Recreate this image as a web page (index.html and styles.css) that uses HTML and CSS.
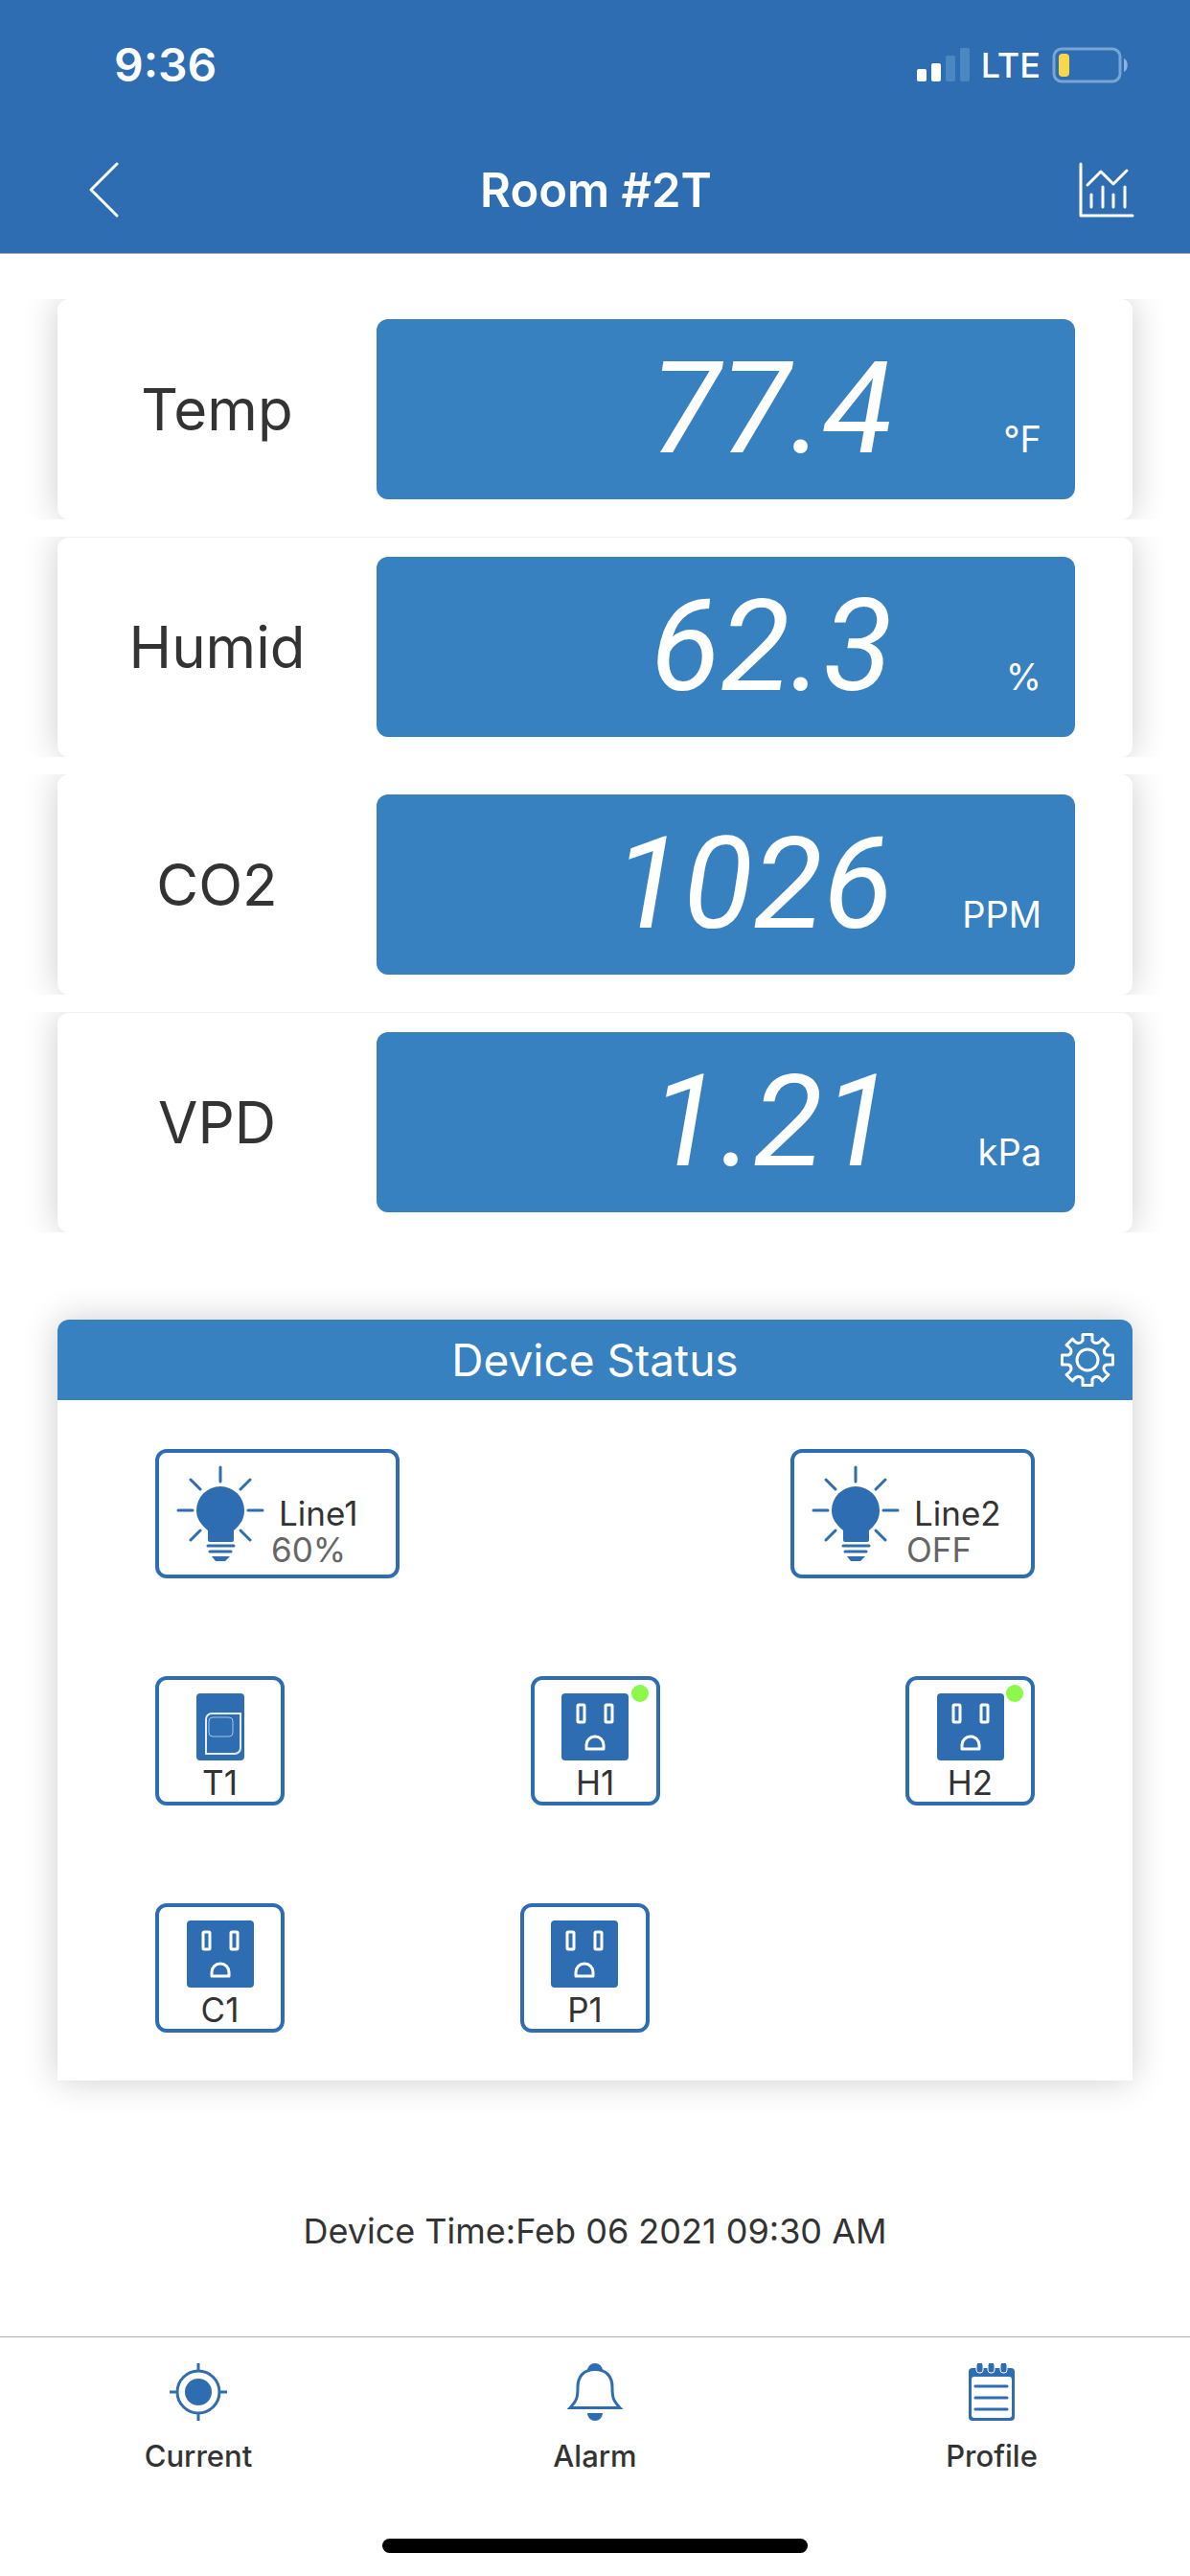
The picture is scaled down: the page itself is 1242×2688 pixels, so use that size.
FILE: index.html
```html
<!DOCTYPE html>
<html lang="en">
<head>
<meta charset="utf-8">
<meta name="viewport" content="width=device-width, initial-scale=1">
<title>Room #2T</title>
<link rel="stylesheet" href="styles.css">
</head>
<body>
<svg class="sprite" aria-hidden="true">
  <symbol id="bulb" viewBox="0 0 92 100">
    <g fill="none" stroke="currentColor" stroke-width="3" stroke-linecap="round">
      <path d="M46 2V17M2 47H17M75 47H90M15 15L25 25M77 15L67 25M15 78L25 68M77 78L67 68"/>
      <path d="M33 84H60M35 90H57"/>
    </g>
    <path fill="currentColor" d="M46 22a25 25 0 0 1 25 25c0 9-4 15-11 21v10a2 2 0 0 1-2 2H35a2 2 0 0 1-2-2V68c-7-6-12-12-12-21a25 25 0 0 1 25-25zM37 95H56L51 100H41z"/>
  </symbol>
  <symbol id="outlet" viewBox="0 0 70 70">
    <rect width="70" height="70" rx="4" fill="currentColor"/>
    <g fill="none" stroke="#fff" stroke-width="3" stroke-linejoin="round">
      <rect x="17" y="12" width="7" height="18" rx="1"/>
      <rect x="46" y="12" width="7" height="18" rx="1"/>
      <path d="M26 58V54a9 9 0 0 1 18 0V58z"/>
    </g>
  </symbol>
</svg>

<header class="top">
  <div class="status">
    <span class="clock">9:36</span>
    <span class="indicators">
      <svg width="55" height="36" viewBox="0 0 55 36" aria-label="Signal">
        <g fill="#fff"><rect y="22" width="10" height="13" rx="2"/><rect x="15" y="16" width="10" height="19" rx="2"/></g>
        <g fill="#4b87c1"><rect x="30" y="8" width="10" height="27" rx="2"/><rect x="45" width="10" height="35" rx="2"/></g>
      </svg>
      <span class="network">LTE</span>
      <svg width="80" height="38" viewBox="0 0 80 38" aria-label="Battery">
        <rect x="2" y="2" width="69" height="34" rx="8" fill="none" stroke="#78a6d4" stroke-width="3"/>
        <path d="M75 12c5 2 5 12 0 14z" fill="#8fb3da"/>
        <rect x="7" y="7" width="11" height="24" rx="4" fill="#fad749"/>
      </svg>
    </span>
  </div>
  <nav class="titlebar">
    <button class="icon-btn" type="button" aria-label="Back">
      <svg width="32" height="58" viewBox="0 0 32 58"><path d="M30 2L3 29L30 56" fill="none" stroke="#fff" stroke-width="3" stroke-linecap="round" stroke-linejoin="round"/></svg>
    </button>
    <h1>Room #2T</h1>
    <button class="icon-btn chart" type="button" aria-label="Chart">
      <svg width="58" height="58" viewBox="0 0 58 58"><path d="M2 2V56H56M9 24L23 10L36 23L50 9M13 34V47M25 26V47M36 34V47M48 26V47" fill="none" stroke="#fff" stroke-width="3" stroke-linecap="round" stroke-linejoin="round"/></svg>
    </button>
  </nav>
</header>

<main>
  <section class="readings">
    <div class="row"><div class="card"><h2>Temp</h2><p class="display"><span class="value">77.4</span><span class="unit">°F</span></p></div></div>
    <div class="row"><div class="card"><h2>Humid</h2><p class="display"><span class="value">62.3</span><span class="unit">%</span></p></div></div>
    <div class="row"><div class="card"><h2>CO2</h2><p class="display"><span class="value">1026</span><span class="unit">PPM</span></p></div></div>
    <div class="row"><div class="card"><h2>VPD</h2><p class="display"><span class="value">1.21</span><span class="unit">kPa</span></p></div></div>
  </section>

  <section class="panel">
    <div class="panel-head">
      <h2>Device Status</h2>
      <button class="icon-btn" type="button" aria-label="Device settings">
        <svg width="56" height="56" viewBox="-28 -28 56 56" fill="none" stroke="#fff" stroke-width="3" stroke-linejoin="round">
          <circle r="11"/>
          <path d="M-5 -26.500H5V-20Q7 -17 10 -17.500Q13 -18 15.500 -22L22 -15.500Q17 -12 17.500 -9Q17 -6 20 -5H26.500V5H20Q17 6 17 9Q17 12 22 15.500L15.500 22Q13 18 10 17.500Q7 17 5 20V26.500H-5V20Q-7 17 -10 17.500Q-13 18 -15.500 22L-22 15.500Q-17 12 -17 9Q-17 6 -20 5H-26.500V-5H-20Q-17 -6 -17 -9Q-17 -12 -22 -15.500L-15.500 -22Q-13 -18 -10 -17.500Q-7 -17 -5 -20Z"/>
        </svg>
      </button>
    </div>
    <div class="devices">
      <div class="device-row">
        <button class="tile light" type="button"><svg width="92" height="100"><use href="#bulb"/></svg><span class="light-text"><span class="light-name">Line1</span><span class="level">60%</span></span></button>
        <button class="tile light" type="button"><svg width="92" height="100"><use href="#bulb"/></svg><span class="light-text"><span class="light-name">Line2</span><span class="level">OFF</span></span></button>
      </div>
      <div class="device-row">
        <button class="tile" type="button">
          <svg width="50" height="70" viewBox="0 0 50 70"><rect width="50" height="70" rx="4" fill="currentColor"/><g fill="none" stroke="#e3edf7"><path d="M10 63V27a6 6 0 0 1 6-6H46V57a6 6 0 0 1-6 6z" stroke-width="2"/><rect x="13" y="25" width="25" height="20" rx="4" stroke="#a9c6e3"/></g></svg>
          <span>T1</span>
        </button>
        <button class="tile on" type="button"><svg width="70" height="70"><use href="#outlet"/></svg><span>H1</span></button>
        <button class="tile on" type="button"><svg width="70" height="70"><use href="#outlet"/></svg><span>H2</span></button>
      </div>
      <div class="device-row partial">
        <button class="tile" type="button"><svg width="70" height="70"><use href="#outlet"/></svg><span>C1</span></button>
        <button class="tile" type="button"><svg width="70" height="70"><use href="#outlet"/></svg><span>P1</span></button>
      </div>
    </div>
  </section>

  <p class="device-time">Device Time:Feb 06 2021 09:30 AM</p>
</main>

<footer>
  <nav class="tabs">
    <a href="#current">
      <svg width="60" height="60" viewBox="0 0 60 60"><g fill="none" stroke="currentColor" stroke-width="3"><circle cx="30" cy="30" r="22"/><path d="M30 0V8M30 52V60M0 30H8M52 30H60"/></g><circle cx="30" cy="30" r="14" fill="currentColor"/></svg>
      Current
    </a>
    <a href="#alarm">
      <svg width="60" height="60" viewBox="0 0 60 60"><path d="M30 6.500C18 6.500 12 14 12 25C12 36 11 39 4 46.500H56C49 39 48 36 48 25C48 14 42 6.500 30 6.500Z" fill="none" stroke="currentColor" stroke-width="3"/><path d="M22 8a8 8 0 0 1 16 0zM22 52H38a8 8 0 0 1-16 0z" fill="currentColor"/></svg>
      Alarm
    </a>
    <a href="#profile">
      <svg width="48" height="60" viewBox="0 0 48 60"><rect y="5" width="48" height="55" rx="4" fill="currentColor"/><rect x="3" y="14" width="42" height="43" rx="3" fill="#fff"/><path d="M7 24H40M7 36H40M7 48H40" stroke="currentColor" stroke-width="3" stroke-linecap="round"/><g fill="currentColor" stroke="#fff"><rect x="8" y="-1" width="7" height="11" rx="3"/><rect x="20" y="-1" width="7" height="11" rx="3"/><rect x="33" y="-1" width="7" height="11" rx="3"/></g></svg>
      Profile
    </a>
  </nav>
  <div class="home-bar"></div>
</footer>
</body>
</html>
```
FILE: styles.css
```css
:root {
  --navy: #2e6db2;
  --blue: #3781c0;
  --ink: #333;
  --shadow: 0 0 36px rgba(0, 0, 0, .2);
}

* { box-sizing: border-box; }

body {
  margin: 0;
  min-height: 100vh;
  display: flex;
  flex-direction: column;
  background: #fff;
  color: var(--ink);
  font-family: Inter, "Liberation Sans", sans-serif;
}

h1, h2, p { margin: 0; font-weight: 400; }
svg { display: block; flex: none; }
button { font: inherit; color: inherit; }

.sprite { position: absolute; width: 0; height: 0; }

.icon-btn {
  padding: 0;
  border: 0;
  background: none;
}

/* Header */
.top {
  background: var(--navy);
  border-bottom: 1px solid #a3a9b0;
  color: #fff;
}

.status {
  display: flex;
  justify-content: space-between;
  align-items: center;
  height: 132px;
  padding: 3px 64px 0 119px;
}

.clock { font-size: 48px; font-weight: 600; }

.indicators {
  display: flex;
  align-items: center;
  gap: 12px;
}

.network { font-size: 36px; font-weight: 500; }

.titlebar {
  display: grid;
  grid-template-columns: 1fr auto 1fr;
  align-items: center;
  height: 132px;
  padding: 0 58px 0 92px;
}

.titlebar h1 {
  margin-right: 32px;
  font-size: 49px;
  font-weight: 600;
}

.titlebar .chart { justify-self: end; }

/* Readings */
.readings {
  display: flex;
  flex-direction: column;
  gap: 18px;
  padding-top: 47px;
}

.row {
  overflow: hidden;
  padding: 0 60px;
}

.card {
  display: flex;
  align-items: center;
  padding: 21px 60px 21px 0;
  border-radius: 12px;
  background: #fff;
  box-shadow: var(--shadow);
}

.row:nth-child(even) .card { box-shadow: var(--shadow), inset 0 1px #f0f0f0; }

.card h2 {
  flex: 1;
  text-align: center;
  font-size: 60px;
}

.display {
  display: flex;
  justify-content: flex-end;
  align-items: baseline;
  width: 729px;
  max-width: 70%;
  padding-right: 35px;
  border-radius: 12px;
  background: var(--blue);
  color: #fff;
  line-height: 188px;
}

.value {
  font-family: Roboto, "Liberation Sans", sans-serif;
  font-size: 134px;
  font-weight: 400;
  font-style: italic;
}

.unit {
  width: 155px;
  text-align: right;
  font-size: 38px;
  line-height: 48px;
}

/* Device panel */
.panel {
  margin: 91px 60px 0;
  border-radius: 12px 12px 0 0;
  background: #fff;
  box-shadow: var(--shadow);
}

.panel-head {
  display: grid;
  grid-template-columns: 1fr auto 1fr;
  align-items: center;
  height: 84px;
  padding: 0 19px;
  border-radius: 12px 12px 0 0;
  background: var(--blue);
  color: #fff;
}

.panel-head h2 {
  grid-column: 2;
  font-size: 46px;
}

.panel-head .icon-btn { justify-self: end; }

.devices {
  display: flex;
  flex-direction: column;
  gap: 102px;
  padding: 51px 102px 50px;
}

.device-row {
  display: flex;
  justify-content: space-between;
}

.partial::after {
  content: "";
  width: 17%;
}

.tile {
  position: relative;
  display: flex;
  flex-direction: column;
  align-items: center;
  gap: 4px;
  width: 135px;
  height: 135px;
  padding: 14px 0 0;
  border: 4px solid var(--navy);
  border-radius: 12px;
  background: #fff;
  color: var(--ink);
  font-size: 35px;
  line-height: 38px;
}

.tile svg { color: var(--navy); }

/* Running indicator */
.on::after {
  content: "";
  position: absolute;
  top: 5px;
  right: 8px;
  width: 18px;
  height: 18px;
  border-radius: 50%;
  background: #8bf84a;
}

.light {
  flex-direction: row;
  align-items: flex-start;
  gap: 7px;
  width: 255px;
  padding: 13px 0 0 18px;
}

.light-text {
  display: flex;
  flex-direction: column;
  padding-top: 31px;
  text-align: left;
}

.light-name { padding-left: 8px; }
.level { color: #666; }

.device-time {
  margin: 133px 0 60px;
  text-align: center;
  font-size: 36px;
  line-height: 48px;
}

/* Tab bar */
footer {
  margin-top: auto;
  padding-bottom: 24px;
  border-top: 1px solid #adadad;
}

.tabs {
  display: grid;
  grid-template-columns: repeat(3, 1fr);
  padding: 27px 0 68px;
}

.tabs a {
  display: flex;
  flex-direction: column;
  align-items: center;
  gap: 19px;
  color: var(--ink);
  font-size: 31px;
  font-weight: 500;
  line-height: 36px;
  text-decoration: none;
}

.tabs svg { color: var(--navy); }

.home-bar {
  width: 444px;
  height: 15px;
  margin: 0 auto;
  border-radius: 8px;
  background: #000;
}
```
